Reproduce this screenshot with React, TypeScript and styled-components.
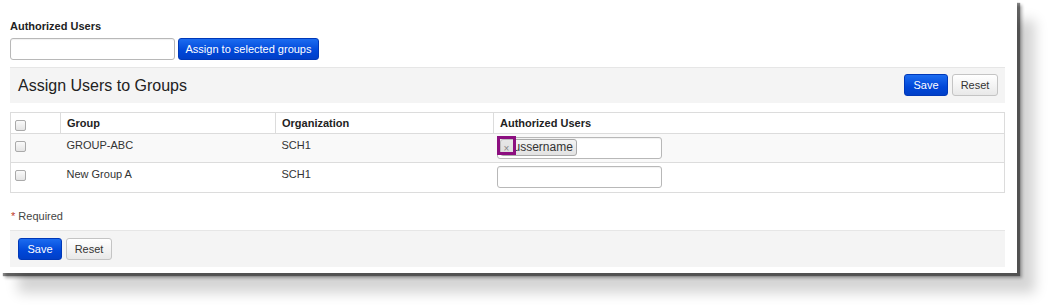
import React from 'react';
import styled, { createGlobalStyle } from 'styled-components';

const GlobalStyle = createGlobalStyle`
  html, body { margin: 0; padding: 0; background: #ffffff; }
  body { font-family: "Liberation Sans", Arial, Helvetica, sans-serif; color: #333; }
  * { box-sizing: border-box; }
`;

const Page = styled.div`
  width: 1050px;
  height: 305px;
  overflow: hidden;
  background: #fff;
`;

const Panel = styled.div`
  width: 1017px;
  height: 273px;
  background: #fff;
  padding: 19px 12px 6px 10px;
  display: flex;
  flex-direction: column;
  box-shadow: 3px 3px 1px rgba(0, 0, 0, 0.45), 5px 5px 3px rgba(0, 0, 0, 0.3),
    18px 20px 12px rgba(0, 0, 0, 0.17), 0 -2px 3px rgba(0, 0, 0, 0.04);
`;

const FieldLabel = styled.div`
  font-size: 11px;
  font-weight: bold;
  color: #222;
  height: 14px;
  line-height: 14px;
  margin-bottom: 5px;
`;

const AssignRow = styled.div`
  display: flex;
  align-items: center;
  gap: 3px;
  margin-bottom: 7px;
`;

const TextBox = styled.div<{ $width?: number }>`
  width: ${p => p.$width ?? 165}px;
  height: 22px;
  border: 1px solid #b8b8b8;
  border-radius: 3px;
  background: #fff;
  box-shadow: inset 0 1px 1px rgba(0, 0, 0, 0.06);
  display: flex;
  align-items: center;
  position: relative;
`;

const Button = styled.button<{ $primary?: boolean; $w?: number }>`
  height: 22px;
  width: ${p => (p.$w ? `${p.$w}px` : 'auto')};
  padding: 0;
  white-space: nowrap;
  border-radius: 3px;
  font-family: inherit;
  font-size: 11px;
  cursor: pointer;
  border: 1px solid ${p => (p.$primary ? '#0038b8' : '#c4c4c4')};
  color: ${p => (p.$primary ? '#fff' : '#333')};
  background: ${p =>
    p.$primary
      ? 'linear-gradient(to bottom, #1c6cf0 0%, #0047d8 60%, #003fc8 100%)'
      : 'linear-gradient(to bottom, #ffffff 0%, #f2f2f2 60%, #e8e8e8 100%)'};
`;

const BarSection = styled.div<{ $h: number }>`
  height: ${p => p.$h}px;
  background: #f4f4f4;
  border-top: 1px solid #e6e6e6;
  display: flex;
  align-items: center;
  padding: 0 7px 0 8px;
  gap: 4px;
`;

const BarTitle = styled.h2`
  margin: 0;
  font-size: 16px;
  font-weight: normal;
  color: #222;
  flex: 1;
  padding-top: 1px;
`;

const Table = styled.table`
  width: 995px;
  margin-top: 9px;
  border-collapse: collapse;
  border: 1px solid #dcdcdc;
  font-size: 11px;
  table-layout: fixed;
`;

const Th = styled.th<{ $w?: number }>`
  width: ${p => (p.$w ? `${p.$w}px` : 'auto')};
  height: 21px;
  text-align: left;
  font-weight: bold;
  color: #222;
  padding: 0 6px;
  border-left: 1px solid #dcdcdc;
  border-bottom: 1px solid #dcdcdc;
  &:first-child { border-left: none; padding-left: 4px; }
`;

const Tr = styled.tr<{ $striped?: boolean; $h: number }>`
  height: ${p => p.$h}px;
  background: ${p => (p.$striped ? '#f9f9f9' : '#fff')};
  border-bottom: 1px solid #dcdcdc;
`;

const Td = styled.td`
  padding: 0 6px;
  color: #333;
  vertical-align: top;
  padding-top: 5px;
  &:first-child { padding-left: 4px; }
`;

const InputTd = styled(Td)`
  padding-top: 3px;
  padding-left: 3px;
`;

const Check = styled.span`
  display: inline-block;
  width: 11px;
  height: 11px;
  margin-top: 2px;
  border: 1px solid #aaa;
  border-radius: 2px;
  background: linear-gradient(to bottom, #fafafa, #e4e4e4);
`;

const HeadCheck = styled(Check)`
  margin-top: 5px;
  vertical-align: top;
`;

const Tag = styled.span`
  margin-left: 2px;
  height: 17px;
  padding: 0 3px 0 13px;
  border: 1px solid #aaa;
  border-radius: 3px;
  background: linear-gradient(to bottom, #f4f4f4, #e2e2e2);
  font-size: 12px;
  line-height: 15px;
  color: #333;
  position: relative;
`;

const TagRemove = styled.span`
  position: absolute;
  left: 3px;
  top: 4px;
  font-size: 10px;
  line-height: 9px;
  color: #444;
`;

const Highlight = styled.span`
  position: absolute;
  left: -1px;
  top: -2px;
  width: 19px;
  height: 19px;
  border: 3px solid #8c0f80;
  background: rgba(215, 215, 215, 0.45);
`;

const Required = styled.div`
  margin-top: 17px;
  height: 13px;
  font-size: 11px;
  color: #444;
  padding-left: 1px;
  margin-bottom: 8px;
  span { color: #c0392b; }
`;

export default function App() {
  return (
    <Page>
      <GlobalStyle />
      <Panel>
        <FieldLabel>Authorized Users</FieldLabel>
        <AssignRow>
          <TextBox />
          <Button $primary $w={141}>Assign to selected groups</Button>
        </AssignRow>

        <BarSection $h={36}>
          <BarTitle>Assign Users to Groups</BarTitle>
          <Button $primary $w={44}>Save</Button>
          <Button $w={46}>Reset</Button>
        </BarSection>

        <Table>
          <thead>
            <tr>
              <Th $w={50}><HeadCheck /></Th>
              <Th $w={215}>Group</Th>
              <Th $w={218}>Organization</Th>
              <Th>Authorized Users</Th>
            </tr>
          </thead>
          <tbody>
            <Tr $striped $h={29}>
              <Td><Check /></Td>
              <Td>GROUP-ABC</Td>
              <Td>SCH1</Td>
              <InputTd>
                <TextBox>
                  <Tag>
                    <TagRemove>×</TagRemove>
                    ussername
                  </Tag>
                  <Highlight />
                </TextBox>
              </InputTd>
            </Tr>
            <Tr $h={30}>
              <Td><Check /></Td>
              <Td>New Group A</Td>
              <Td>SCH1</Td>
              <InputTd><TextBox /></InputTd>
            </Tr>
          </tbody>
        </Table>

        <Required><span>*</span> Required</Required>

        <BarSection $h={37}>
          <Button $primary $w={44}>Save</Button>
          <Button $w={46}>Reset</Button>
        </BarSection>
      </Panel>
    </Page>
  );
}
